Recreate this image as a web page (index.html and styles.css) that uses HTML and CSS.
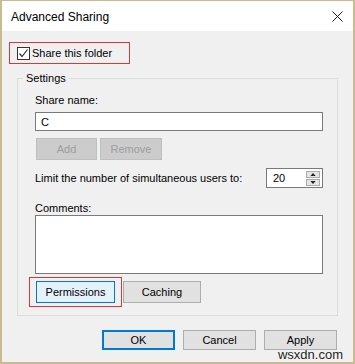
FILE: index.html
```html
<!DOCTYPE html>
<html lang="en">
<head>
  <meta charset="UTF-8" />
  <title>Advanced Sharing</title>
  <link rel="stylesheet" href="styles.css">
</head>
<body>
  <div class="window">
    <div class="titlebar">
      <span class="title">Advanced Sharing</span>
      <svg class="close" width="11" height="11" viewBox="0 0 11 11">
        <path d="M0.5 0.5 L10.5 10.5 M10.5 0.5 L0.5 10.5" stroke="#1a1a1a" stroke-width="1" fill="none" />
      </svg>
    </div>

    <div class="share-box">
      <span class="checkbox">
        <svg width="11" height="11" viewBox="0 0 11 11">
          <polyline points="1.5,5.5 4,8.5 9.5,1.5" stroke="#333" stroke-width="1.2" fill="none" />
        </svg>
      </span>
      <span>Share this folder</span>
    </div>

    <fieldset class="settings">
      <legend>Settings</legend>

      <div class="field-label">Share name:</div>
      <div class="text-input">C</div>

      <div class="name-buttons">
        <button class="btn btn-disabled btn-add">Add</button>
        <button class="btn btn-disabled btn-remove">Remove</button>
      </div>

      <div class="limit-row">
        <span>Limit the number of simultaneous users to:</span>
        <div class="spin">
          <span>20</span>
          <div class="spin-buttons">
            <span class="spin-btn">
              <svg width="7" height="4" viewBox="0 0 7 4"><polygon points="0,4 3.5,0 7,4" fill="#222" /></svg>
            </span>
            <span class="spin-btn">
              <svg width="7" height="4" viewBox="0 0 7 4"><polygon points="0,0 7,0 3.5,4" fill="#222" /></svg>
            </span>
          </div>
        </div>
      </div>

      <div class="field-label comments-label">Comments:</div>
      <div class="comments"></div>

      <div class="action-row">
        <div class="perm-box">
          <button class="btn btn-focus btn-perm">Permissions</button>
        </div>
        <button class="btn btn-caching">Caching</button>
      </div>
    </fieldset>

    <div class="dialog-buttons">
      <button class="btn btn-dialog btn-default">OK</button>
      <button class="btn btn-dialog">Cancel</button>
      <button class="btn btn-dialog">Apply</button>
    </div>

    <span class="watermark">wsxdn.com</span>
  </div>
</body>
</html>
```

FILE: styles.css
```css
body {
  margin: 0;
}
.window {
  position: relative;
  width: 355px;
  height: 364px;
  box-sizing: border-box;
  border: 2px solid #c9bb8f;
  border-top-width: 1px;
  background-color: #f0f0f0;
  font-family: "Liberation Sans", Arial, sans-serif;
  font-size: 11px;
  color: #000;
  overflow: hidden;
}
.titlebar {
  height: 30px;
  background-color: #fff;
  display: flex;
  align-items: center;
  justify-content: space-between;
  padding: 0 10px 0 9px;
}
.title {
  font-size: 12px;
  padding-top: 1px;
}
.close {
  display: block;
}
.share-box {
  display: flex;
  align-items: center;
  gap: 2px;
  box-sizing: border-box;
  width: 121px;
  height: 22px;
  margin: 11px 0 0 7px;
  padding-left: 7px;
  border: 1px solid #d9363e;
}
.checkbox {
  display: flex;
  align-items: center;
  justify-content: center;
  box-sizing: border-box;
  width: 13px;
  height: 13px;
  border: 1px solid #333;
  background-color: #fff;
}
.settings {
  margin: 6px 15px 0 15px;
  padding: 6px 14px 8px 17px;
  border: 1px solid #dcdcdc;
}
.settings legend {
  margin-left: -12px;
  padding: 0 3px;
  line-height: 16px;
}
.field-label {
  line-height: 16px;
}
.text-input {
  display: flex;
  align-items: center;
  box-sizing: border-box;
  height: 19px;
  margin-top: 4px;
  padding-left: 5px;
  border: 1px solid #7a7a7a;
  background-color: #fff;
}
.btn {
  box-sizing: border-box;
  height: 22px;
  padding: 0;
  font: inherit;
  color: #000;
  background-color: #e1e1e1;
  border: 1px solid #adadad;
}
.name-buttons {
  display: flex;
  gap: 3px;
  margin: 7px 0 0 1px;
}
.btn-disabled {
  background-color: #cccccc;
  border-color: #bfbfbf;
  color: #9d9d9d;
}
.btn-add {
  width: 61px;
}
.btn-remove {
  width: 62px;
}
.limit-row {
  display: flex;
  align-items: center;
  justify-content: space-between;
  height: 20px;
  margin-top: 8px;
}
.spin {
  display: flex;
  align-items: center;
  box-sizing: border-box;
  width: 57px;
  height: 20px;
  padding: 0 2px 0 6px;
  border: 1px solid #7a7a7a;
  background-color: #fff;
}
.spin-buttons {
  margin-left: auto;
  display: flex;
  flex-direction: column;
  gap: 1px;
}
.spin-btn {
  display: flex;
  align-items: center;
  justify-content: center;
  box-sizing: border-box;
  width: 14px;
  height: 7px;
  background-color: #e5e5e5;
  border: 1px solid #acacac;
}
.spin-btn svg {
  width: 6px;
  height: 3px;
}
.comments-label {
  margin-top: 13px;
  line-height: 14px;
}
.comments {
  box-sizing: border-box;
  height: 59px;
  border: 1px solid #7a7a7a;
  background-color: #fff;
}
.action-row {
  display: flex;
  align-items: center;
  margin: 3px 0 0 -6px;
}
.perm-box {
  padding: 3px 6px;
  border: 1px solid #d9363e;
}
.btn-perm {
  display: block;
  width: 79px;
}
.btn-focus {
  background-color: #e5f1fb;
  border-color: #0078d7;
}
.btn-caching {
  width: 78px;
  margin-left: 1px;
}
.dialog-buttons {
  display: flex;
  justify-content: flex-end;
  gap: 8px;
  margin: 14px 16px 0 0;
}
.btn-dialog {
  width: 73px;
  height: 20px;
}
.btn-default {
  border: 2px solid #0078d7;
}
.watermark {
  position: absolute;
  right: 10px;
  bottom: 0;
  font-size: 13px;
  color: #222;
  text-shadow: 0 0 2px #fff;
}
```
